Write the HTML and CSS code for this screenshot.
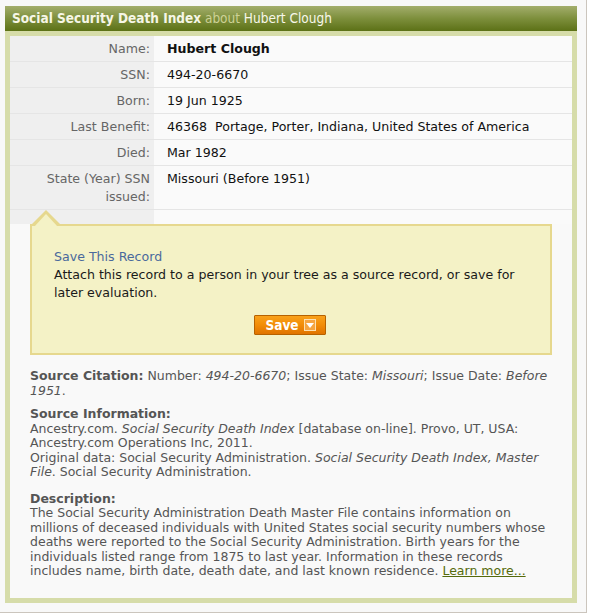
FILE: index.html
```html
<!DOCTYPE html>
<html lang="en">
<head>
<meta charset="utf-8">
<title>Social Security Death Index about Hubert Clough</title>
<link rel="stylesheet" href="styles.css">
</head>
<body>
<div class="page">
  <div class="panel">
    <div class="panel-head"><strong class="head-title">Social Security Death Index</strong> <span class="head-about">about</span> Hubert Clough</div>
    <div class="panel-body">
      <div class="facts">
        <div class="fact"><div class="fact-label">Name:</div><div class="fact-value fact-strong">Hubert Clough</div></div>
        <div class="fact"><div class="fact-label">SSN:</div><div class="fact-value">494-20-6670</div></div>
        <div class="fact"><div class="fact-label">Born:</div><div class="fact-value">19 Jun 1925</div></div>
        <div class="fact"><div class="fact-label">Last Benefit:</div><div class="fact-value">46368&nbsp; Portage, Porter, Indiana, United States of America</div></div>
        <div class="fact"><div class="fact-label">Died:</div><div class="fact-value">Mar 1982</div></div>
        <div class="fact"><div class="fact-label">State (Year) SSN issued:</div><div class="fact-value">Missouri (Before 1951)</div></div>
        <div class="fact fact-spacer"><div class="fact-label"></div><div class="fact-value"></div></div>
      </div>

      <div class="save-box">
        <div class="save-title">Save This Record</div>
        <p class="save-text">Attach this record to a person in your tree as a source record, or save for later evaluation.</p>
        <div class="save-actions">
          <button class="save-btn" type="button">Save<span class="save-drop"><svg width="8" height="5" viewBox="0 0 8 5"><path d="M0 0h8L4 5z" fill="#fff"/></svg></span></button>
        </div>
      </div>

      <div class="source">
        <p class="src-block src-cit"><b>Source Citation:</b> Number: <i>494-20-6670</i>; Issue State: <i>Missouri</i>; Issue Date: <i>Before 1951</i>.</p>
        <p class="src-block src-info"><b>Source Information:</b><br>Ancestry.com. <i>Social Security Death Index</i> [database on-line]. Provo, UT, USA: Ancestry.com Operations Inc, 2011.<br>Original data: Social Security Administration. <i>Social Security Death Index, Master File</i>. Social Security Administration.</p>
        <p class="src-block src-desc"><b>Description:</b><br>The Social Security Administration Death Master File contains information on millions of deceased individuals with United States social security numbers whose deaths were reported to the Social Security Administration. Birth years for the individuals listed range from 1875 to last year. Information in these records includes name, birth date, death date, and last known residence. <a class="learn" href="#">Learn more...</a></p>
      </div>
    </div>
  </div>
</div>
</body>
</html>
```

FILE: styles.css
```css
html, body {
  margin: 0;
  padding: 0;
  background: #ffffff;
}

body {
  font-family: "DejaVu Sans", sans-serif;
  color: #222;
}

.page {
  box-sizing: border-box;
  width: 587px;
  height: 613px;
  padding: 6px 9px 9px 5px;
  background: #f8f8f8;
  border-right: 1px solid #cbc5bd;
  border-bottom: 1px solid #cbc5bd;
}

.panel {
  width: 572px;
}

.panel-head {
  height: 25px;
  line-height: 25px;
  padding-left: 7px;
  background: linear-gradient(#a3ae6c, #7d8f3c 50%, #5c7116);
  color: #f7f7ea;
  font-family: "DejaVu Sans Condensed", "DejaVu Sans", sans-serif;
  font-size: 13.5px;
  white-space: nowrap;
}

.head-title {
  font-weight: bold;
  color: #f6f6e6;
}

.head-about {
  color: #cdd196;
}

.panel-body {
  border: 5px solid #d6dca9;
  background: #f9f9f9;
  padding-bottom: 19px;
}

.facts {
  display: flex;
  flex-direction: column;
  font-size: 12.6px;
  line-height: 18px;
}

.fact {
  display: grid;
  grid-template-columns: 144px 1fr;
  border-bottom: 1px solid #e5e5e5;
}

.fact-label {
  background: #efefef;
  color: #666;
  text-align: right;
  padding: 4px 4px 3px 12px;
}

.fact-value {
  background: #fafafa;
  color: #111;
  padding: 4px 8px 3px 13px;
}

.fact-strong {
  font-weight: bold;
}

.fact-spacer {
  border-bottom: none;
  height: 14px;
}

.fact-spacer .fact-label,
.fact-spacer .fact-value {
  padding: 0;
}

.save-box {
  position: relative;
  margin: 0 20px;
  border: 2px solid #e6d88e;
  background: #f4f2c6;
  padding: 22px 20px 18px 22px;
  font-size: 12.6px;
  line-height: 18px;
}

.save-box::before {
  content: "";
  position: absolute;
  left: -1px;
  top: -16px;
  width: 0;
  height: 0;
  border-left: 15px solid transparent;
  border-right: 15px solid transparent;
  border-bottom: 15px solid #e6d88e;
}

.save-box::after {
  content: "";
  position: absolute;
  left: 2px;
  top: -12px;
  width: 0;
  height: 0;
  border-left: 12px solid transparent;
  border-right: 12px solid transparent;
  border-bottom: 13px solid #f4f2c6;
}

.save-title {
  color: #4a699c;
}

.save-text {
  margin: 0;
  color: #1a1a1a;
}

.save-actions {
  display: flex;
  justify-content: center;
  margin-top: 13px;
}

.save-btn {
  display: flex;
  align-items: center;
  gap: 5px;
  height: 20px;
  padding: 0 9px 0 10px;
  margin-right: 4px;
  border: 1px solid #b66200;
  border-radius: 1px;
  background: linear-gradient(#f9a21a, #f28c08 50%, #e07400);
  color: #fff;
  font-family: "DejaVu Sans Condensed", "DejaVu Sans", sans-serif;
  font-size: 13.5px;
  font-weight: bold;
  line-height: 18px;
  cursor: pointer;
}

.save-drop {
  box-sizing: border-box;
  display: flex;
  align-items: center;
  justify-content: center;
  width: 12px;
  height: 12px;
  border: 1px solid #fde0b0;
  background: #f6a540;
}

.source {
  padding: 14px 20px 0;
  font-size: 12.5px;
  line-height: 14.5px;
  color: #555;
}

.src-block {
  margin: 0;
}

.src-block b {
  color: #555;
}

.src-info {
  margin-top: 9px;
}

.src-desc {
  margin-top: 12px;
}

.learn {
  color: #556a0c;
  text-decoration: underline;
}
```
